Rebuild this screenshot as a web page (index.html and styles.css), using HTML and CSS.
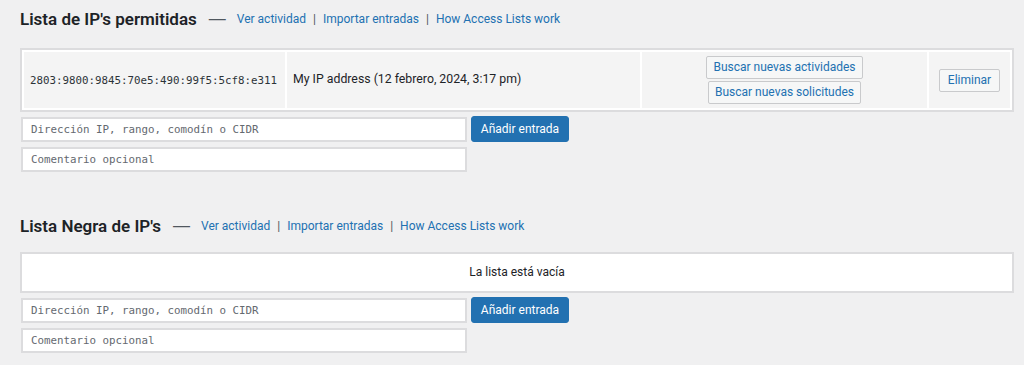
FILE: index.html
```html
<!DOCTYPE html>
<html lang="es">
<head>
<meta charset="utf-8">
<title>Listas de acceso</title>
<link rel="stylesheet" href="styles.css">
</head>
<body>
<div class="wrap">
  <section class="list-section">
    <h2 class="list-title">Lista de IP's permitidas <span class="dash">—</span>
      <span class="links"><a href="#">Ver actividad</a><span class="sep">|</span><a href="#">Importar entradas</a><span class="sep">|</span><a href="#">How Access Lists work</a></span>
    </h2>
    <table class="entries">
      <tr>
        <td class="c-ip"><code>2803:9800:9845:70e5:490:99f5:5cf8:e311</code></td>
        <td class="c-comment">My IP address (12 febrero, 2024, 3:17 pm)</td>
        <td class="c-actions">
          <button class="btn-light" type="button">Buscar nuevas actividades</button>
          <button class="btn-light" type="button">Buscar nuevas solicitudes</button>
        </td>
        <td class="c-delete"><button class="btn-light" type="button">Eliminar</button></td>
      </tr>
    </table>
    <form class="add-form">
      <input class="field" type="text" placeholder="Dirección IP, rango, comodín o CIDR">
      <button class="btn-primary" type="button">Añadir entrada</button>
      <input class="field" type="text" placeholder="Comentario opcional">
    </form>
  </section>

  <section class="list-section second">
    <h2 class="list-title">Lista Negra de IP's <span class="dash">—</span>
      <span class="links"><a href="#">Ver actividad</a><span class="sep">|</span><a href="#">Importar entradas</a><span class="sep">|</span><a href="#">How Access Lists work</a></span>
    </h2>
    <table class="entries empty">
      <tr>
        <td class="c-empty">La lista está vacía</td>
      </tr>
    </table>
    <form class="add-form">
      <input class="field" type="text" placeholder="Dirección IP, rango, comodín o CIDR">
      <button class="btn-primary" type="button">Añadir entrada</button>
      <input class="field" type="text" placeholder="Comentario opcional">
    </form>
  </section>
</div>
</body>
</html>
```

FILE: styles.css
```css
html, body {
  margin: 0;
  padding: 0;
}
body {
  background: #f0f0f1;
  color: #1d2327;
  font-family: Roboto, "Liberation Sans", sans-serif;
  font-size: 12px;
  line-height: 1.4;
}
.wrap {
  padding: 8px 10px 0 20px;
}
.list-section.second {
  margin-top: 43px;
}
.list-title {
  margin: 0 0 18px;
  font-size: 17px;
  font-weight: 600;
  line-height: 22px;
  color: #1d2327;
  display: flex;
  align-items: center;
  white-space: nowrap;
}
.second .list-title {
  margin-bottom: 15px;
}
.dash {
  font-family: "Liberation Sans", sans-serif;
  color: #50575e;
  font-weight: 400;
  margin: 0 11px 0 12px;
}
.links {
  font-size: 12px;
  font-weight: 400;
  display: flex;
  align-items: center;
}
.links a {
  color: #2271b1;
  text-decoration: none;
}
.sep {
  color: #50575e;
  margin: 0 7px;
}
.entries {
  width: 100%;
  border: 2px solid #dcdcde;
  border-spacing: 2px;
  background: #fff;
  border-collapse: separate;
}
.entries td {
  background: #f4f4f4;
  padding: 0 6px;
  vertical-align: middle;
  height: 56px;
}
.c-ip {
  width: 249px;
}
.c-ip code {
  font-family: "DejaVu Sans Mono", monospace;
  font-size: 10.8px;
  color: #2c3338;
}
.c-comment {
  width: 341px;
  font-size: 12.3px;
}
.c-actions {
  width: 273px;
  text-align: center;
}
.c-actions .btn-light {
  display: block;
  margin: 0 auto;
}
.c-actions .btn-light + .btn-light {
  margin-top: 2px;
}
.c-delete {
  text-align: center;
}
.btn-light {
  font-family: Roboto, "Liberation Sans", sans-serif;
  font-size: 12px;
  line-height: 19px;
  color: #2271b1;
  background: #f6f7f7;
  border: 1px solid #c9cacc;
  border-radius: 2px;
  padding: 1px 6px;
  cursor: pointer;
}
.c-delete .btn-light {
  padding: 1px 8px;
}
.entries.empty td {
  background: #fff;
  height: 33px;
  text-align: center;
}
.add-form {
  display: grid;
  grid-template-columns: 446px auto;
  justify-content: start;
  align-items: center;
  column-gap: 5px;
  row-gap: 5px;
  margin-top: 4px;
}
.field {
  box-sizing: border-box;
  width: 446px;
  height: 25px;
  margin: 0 0 0 1px;
  border: 2px solid #dcdcde;
  background: #fff;
  padding: 0 8px;
  font-family: "DejaVu Sans Mono", monospace;
  font-size: 10.8px;
  color: #2c3338;
}
.field::placeholder {
  color: #646970;
}
.btn-primary {
  height: 26px;
  width: 98px;
  padding: 0;
  background: #2271b1;
  color: #fff;
  border: 1px solid #2271b1;
  border-radius: 3px;
  font-family: Roboto, "Liberation Sans", sans-serif;
  font-size: 12px;
  cursor: pointer;
  justify-self: start;
}
```
